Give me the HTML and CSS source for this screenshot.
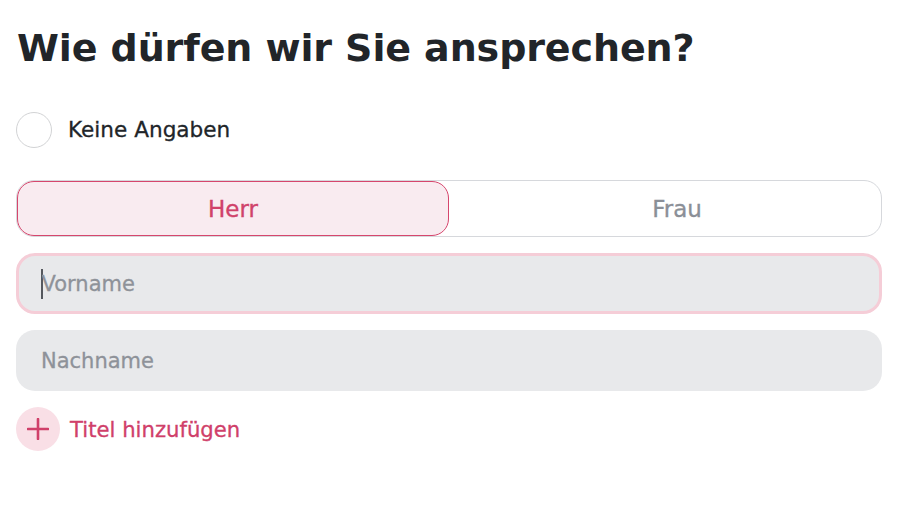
FILE: index.html
```html
<!DOCTYPE html>
<html lang="de">
<head>
<meta charset="utf-8">
<title>Wie dürfen wir Sie ansprechen?</title>
<link rel="stylesheet" href="styles.css">
</head>
<body>
<main class="form">
  <h1 class="title">Wie dürfen wir Sie ansprechen?</h1>
  <label class="radio-row">
    <span class="radio"></span>
    <span class="radio-label">Keine Angaben</span>
  </label>
  <div class="stack">
    <div class="segmented">
      <button class="seg seg-active" type="button">Herr</button>
      <button class="seg seg-right" type="button">Frau</button>
    </div>
    <div class="field field-focus">
      <span class="caret"></span>
      <input class="field-input" type="text" placeholder="Vorname">
    </div>
    <div class="field">
      <input class="field-input" type="text" placeholder="Nachname">
    </div>
    <button class="add" type="button">
      <span class="add-icon">
        <svg width="22" height="22" viewBox="0 0 22 22" aria-hidden="true">
          <path d="M11 1v20M1 11h20" stroke="#d0406a" stroke-width="2.6" stroke-linecap="round" fill="none"/>
        </svg>
      </span>
      <span class="add-label">Titel hinzufügen</span>
    </button>
  </div>
</main>
</body>
</html>
```

FILE: styles.css
```css
* {
  box-sizing: border-box;
}

html, body {
  margin: 0;
  padding: 0;
  background: #ffffff;
}

body {
  font-family: "DejaVu Sans", "Liberation Sans", sans-serif;
  color: #212529;
}

.form {
  padding: 25px 18px 0 16px;
  display: flex;
  flex-direction: column;
}

.title {
  margin: 0 0 41px 1px;
  font-size: 38px;
  line-height: 46px;
  font-weight: 700;
  color: #212529;
  letter-spacing: -0.1px;
}

.radio-row {
  display: flex;
  align-items: center;
  gap: 16px;
  height: 36px;
  margin-bottom: 32px;
}

.radio {
  width: 36px;
  height: 36px;
  border-radius: 50%;
  border: 1.5px solid #d2d3d5;
  background: #ffffff;
  flex: none;
}

.radio-label {
  font-size: 21.6px;
  line-height: 1;
  color: #212529;
  -webkit-text-stroke: 0.3px currentColor;
}

.stack {
  display: flex;
  flex-direction: column;
  gap: 16px;
}

.segmented {
  display: grid;
  grid-template-columns: 1fr 1fr;
  height: 57px;
  border: 1px solid #d6d8dc;
  border-radius: 18px;
  background: #ffffff;
}

.seg {
  border: 1px solid transparent;
  border-radius: 17px;
  background: transparent;
  font-family: inherit;
  font-size: 23px;
  color: #8b8f97;
  padding: 0;
  margin: 0;
  -webkit-text-stroke: 0.35px currentColor;
}

.seg-right {
  padding-left: 24px;
}

.seg-active {
  background: #f9ebf0;
  border-color: #d6466d;
  color: #d0426a;
}

.field {
  display: flex;
  align-items: center;
  height: 61px;
  border: 3px solid transparent;
  border-radius: 19px;
  background: #e8e9eb;
  padding-left: 22px;
}

.field-focus {
  border-color: #f5cdd7;
}

.caret {
  width: 1.5px;
  height: 30px;
  background: #55585e;
  flex: none;
  margin-right: -1px;
}

.field-input {
  flex: 1;
  border: none;
  outline: none;
  background: transparent;
  font-family: inherit;
  font-size: 21px;
  color: #212529;
  padding: 0;
  margin: 0;
  -webkit-text-stroke: 0.3px #8e9299;
}

.field-input::placeholder {
  color: #8e9299;
  opacity: 1;
}

.add {
  display: flex;
  align-items: center;
  gap: 10px;
  border: none;
  background: transparent;
  padding: 0;
  margin: 0;
  font-family: inherit;
  cursor: pointer;
  align-self: flex-start;
}

.add-icon {
  width: 44px;
  height: 44px;
  border-radius: 50%;
  background: #f9dfe6;
  display: flex;
  align-items: center;
  justify-content: center;
  flex: none;
}

.add-label {
  font-size: 21.2px;
  color: #d0406a;
  -webkit-text-stroke: 0.3px currentColor;
}
```
